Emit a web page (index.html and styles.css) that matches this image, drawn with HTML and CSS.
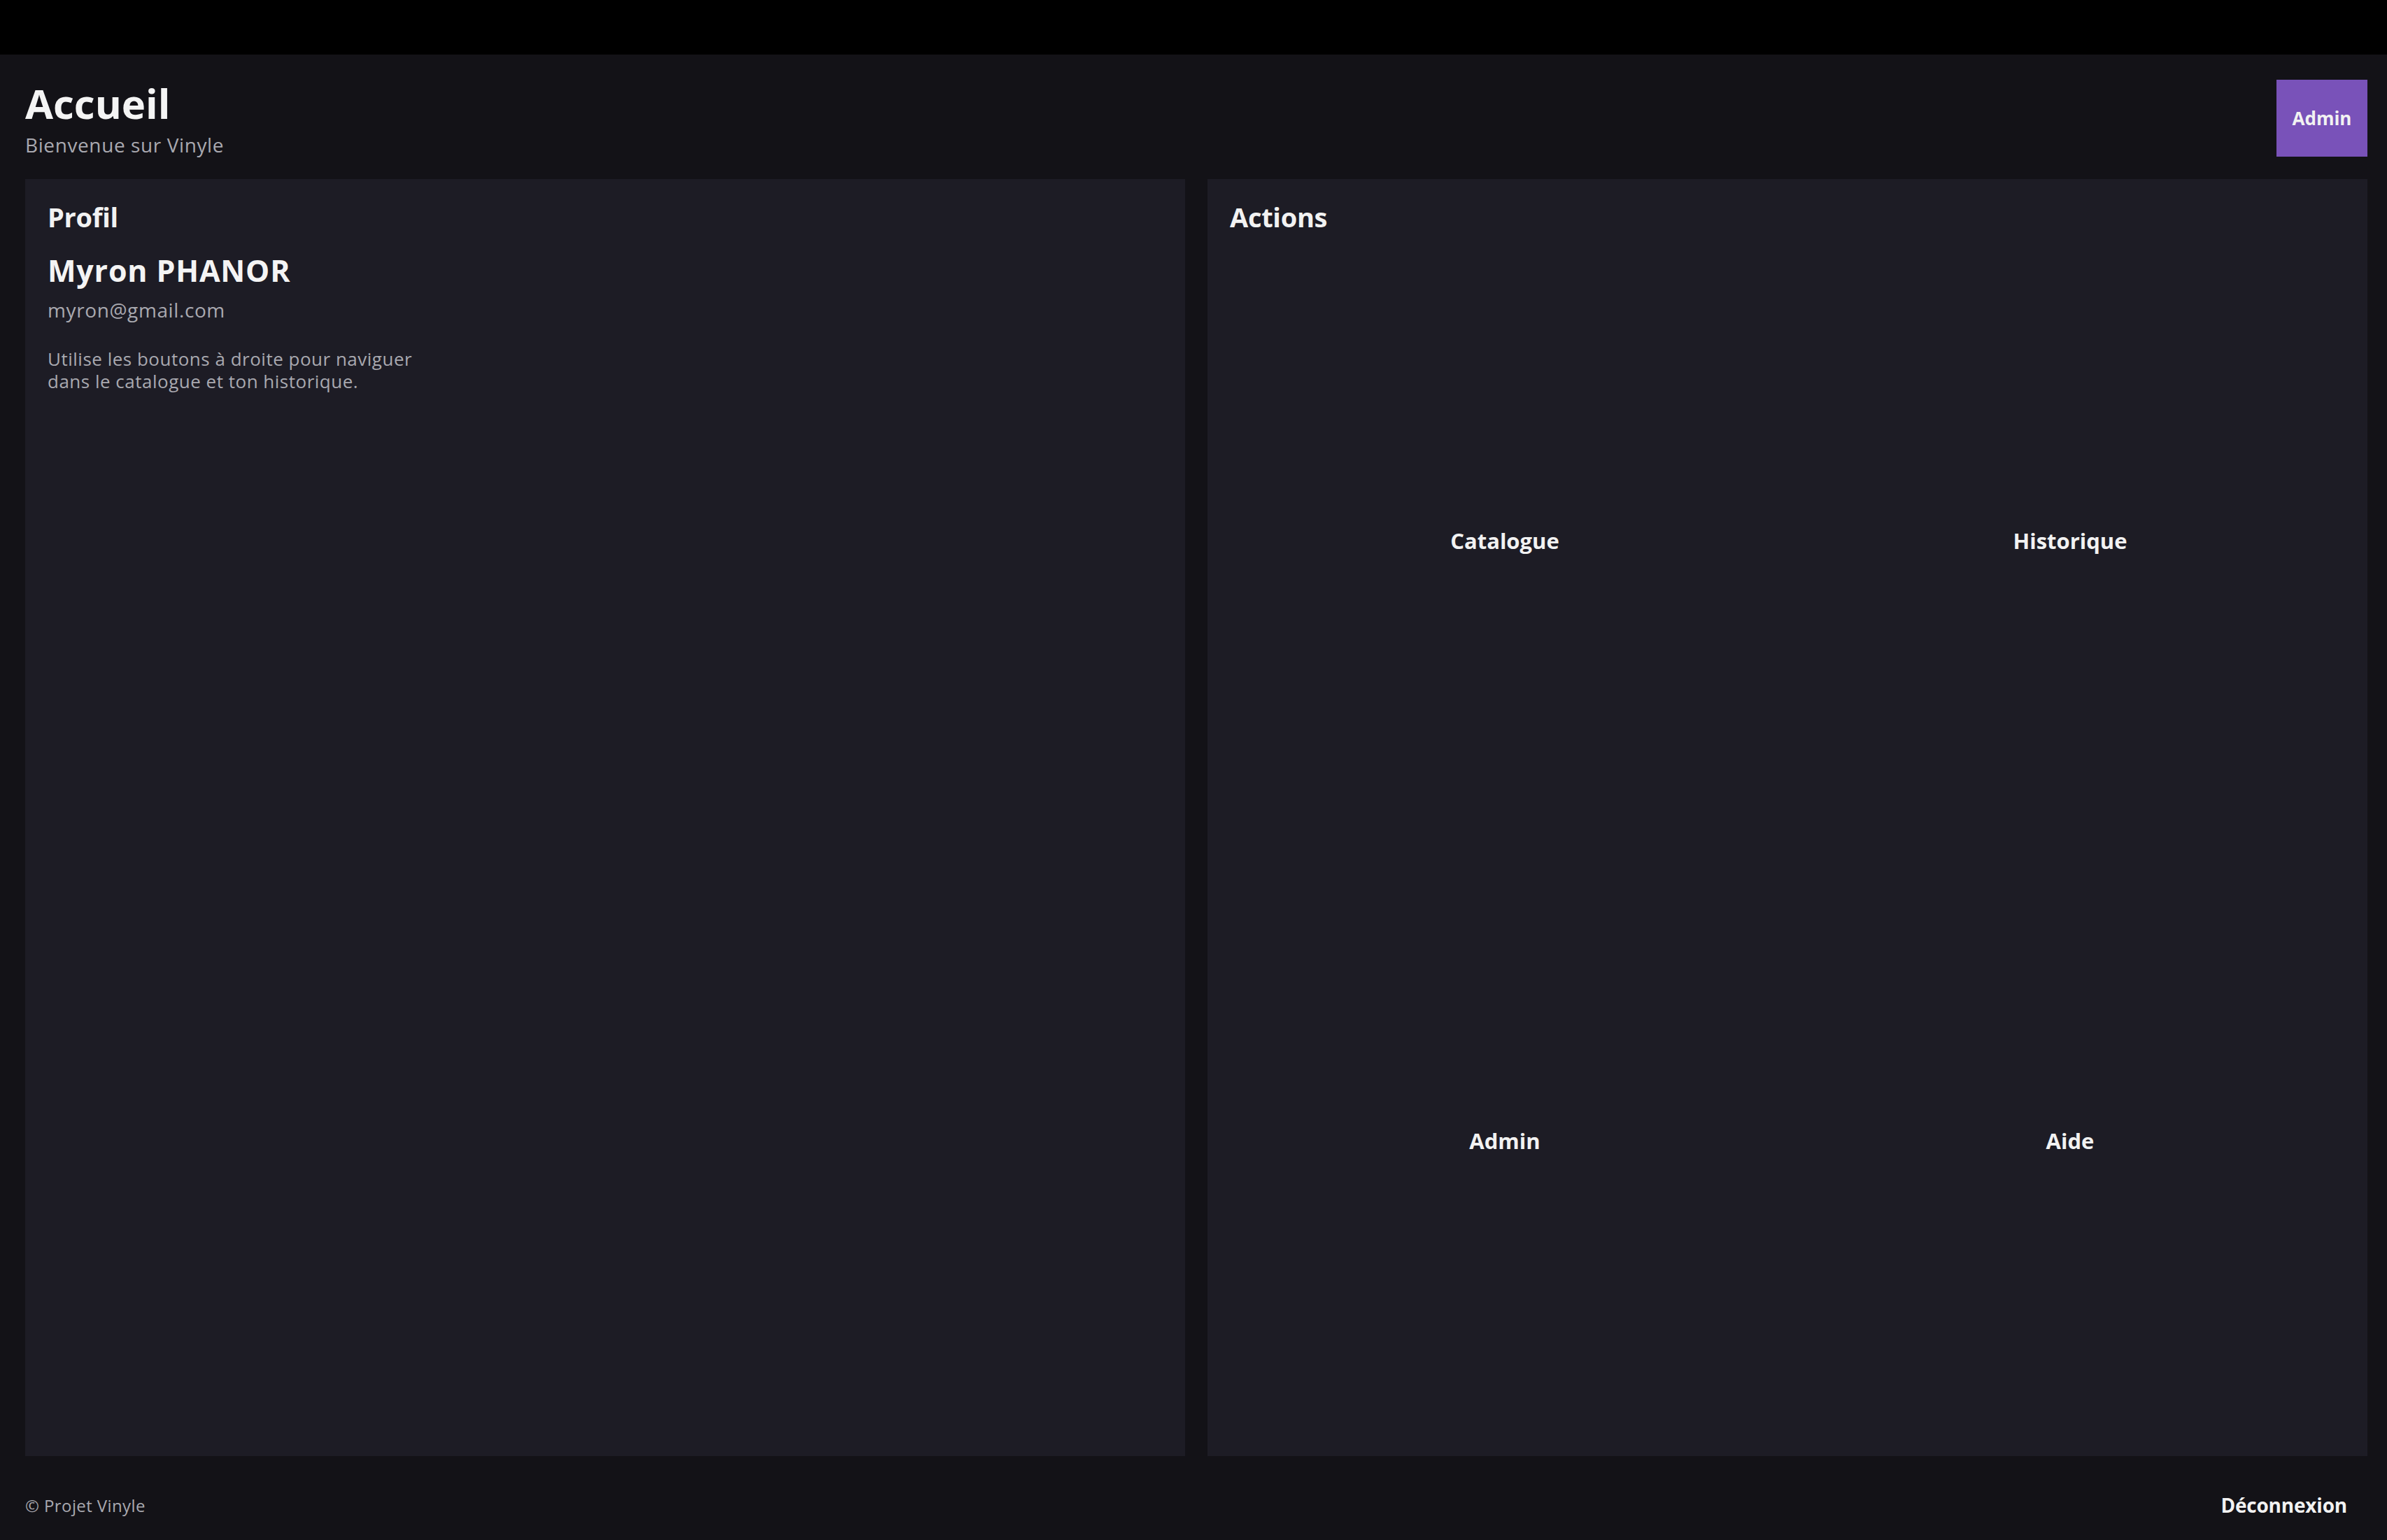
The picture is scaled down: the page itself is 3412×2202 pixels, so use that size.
FILE: index.html
```html
<!DOCTYPE html>
<html lang="fr">
<head>
<meta charset="utf-8">
<title>Accueil - Vinyle</title>
<link rel="stylesheet" href="styles.css">
</head>
<body>
<div class="topbar"></div>
<div class="page">
  <header class="header">
    <div class="title-block">
      <h1 class="title">Accueil</h1>
      <p class="subtitle">Bienvenue sur Vinyle</p>
    </div>
    <button class="admin-btn" type="button">Admin</button>
  </header>
  <main class="main">
    <section class="panel">
      <h2 class="panel-title">Profil</h2>
      <div class="name">Myron PHANOR</div>
      <div class="email">myron@gmail.com</div>
      <p class="desc">Utilise les boutons à droite pour naviguer dans le catalogue et ton historique.</p>
    </section>
    <section class="panel panel-actions">
      <h2 class="panel-title">Actions</h2>
      <div class="actions-grid">
        <button class="action" type="button">Catalogue</button>
        <button class="action" type="button">Historique</button>
        <button class="action" type="button">Admin</button>
        <button class="action" type="button">Aide</button>
      </div>
    </section>
  </main>
  <footer class="footer">
    <span class="copyright">© Projet Vinyle</span>
    <button class="logout" type="button">Déconnexion</button>
  </footer>
</div>
</body>
</html>
```
FILE: styles.css
```css
* { box-sizing: border-box; }
html, body { margin: 0; padding: 0; }
body {
  background: #131217;
  color: #f2f2f2;
  font-family: "Open Sans", "Noto Sans", "DejaVu Sans", sans-serif;
  height: 2202px;
  overflow: hidden;
}
.topbar { height: 78px; background: #000; }
.page {
  height: 2124px;
  display: flex;
  flex-direction: column;
  padding: 0 28px 0 36px;
}
.header {
  display: flex;
  justify-content: space-between;
  align-items: flex-start;
  padding-top: 36px;
}
.title-block { display: flex; flex-direction: column; }
.title {
  margin: 2px 0 0;
  font-size: 58px;
  line-height: 64px;
  font-weight: 700;
  color: #f4f4f4;
}
.subtitle {
  margin: 10px 0 0;
  font-size: 28px;
  line-height: 34px;
  color: #a9a9b0;
  letter-spacing: 0.6px;
}
.admin-btn {
  width: 130px;
  height: 110px;
  background: #7952b9;
  border: none;
  color: #f2f2f2;
  font-family: inherit;
  font-weight: 700;
  font-size: 26px;
  padding: 0;
}
.main {
  flex: 1;
  display: flex;
  gap: 32px;
  margin-top: 32px;
  min-height: 0;
}
.panel {
  flex: 1;
  background: #1d1c25;
  padding: 32px;
  display: flex;
  flex-direction: column;
}
.panel-title {
  margin: 0;
  font-size: 38px;
  line-height: 44px;
  font-weight: 700;
  color: #f2f2f2;
  letter-spacing: -0.3px;
}
.name {
  margin-top: 30px;
  font-size: 43px;
  line-height: 50px;
  font-weight: 700;
  color: #f4f4f4;
  letter-spacing: 0.8px;
}
.email {
  margin-top: 14px;
  font-size: 28px;
  line-height: 34px;
  color: #a9a9b0;
  letter-spacing: 0.6px;
}
.desc {
  margin: 37px 0 0;
  font-size: 26px;
  line-height: 32px;
  color: #a9a9b0;
  letter-spacing: 0.5px;
  max-width: 580px;
}
.actions-grid {
  flex: 1;
  margin-top: 22px;
  display: grid;
  grid-template-columns: 1fr 1fr;
  grid-template-rows: 1fr 1fr;
  gap: 20px 22px;
}
.action {
  background: transparent;
  border: none;
  color: #f2f2f2;
  font-family: inherit;
  font-weight: 700;
  font-size: 31px;
  padding: 0;
}
.footer {
  height: 120px;
  padding-top: 20px;
  display: flex;
  justify-content: space-between;
  align-items: center;
}
.copyright {
  font-size: 24px;
  color: #a9a9b0;
  letter-spacing: 0.4px;
}
.logout {
  background: transparent;
  border: none;
  color: #f2f2f2;
  font-family: inherit;
  font-weight: 700;
  font-size: 28px;
  letter-spacing: -0.2px;
  padding: 14px 29px 14px 20px;
}
```
